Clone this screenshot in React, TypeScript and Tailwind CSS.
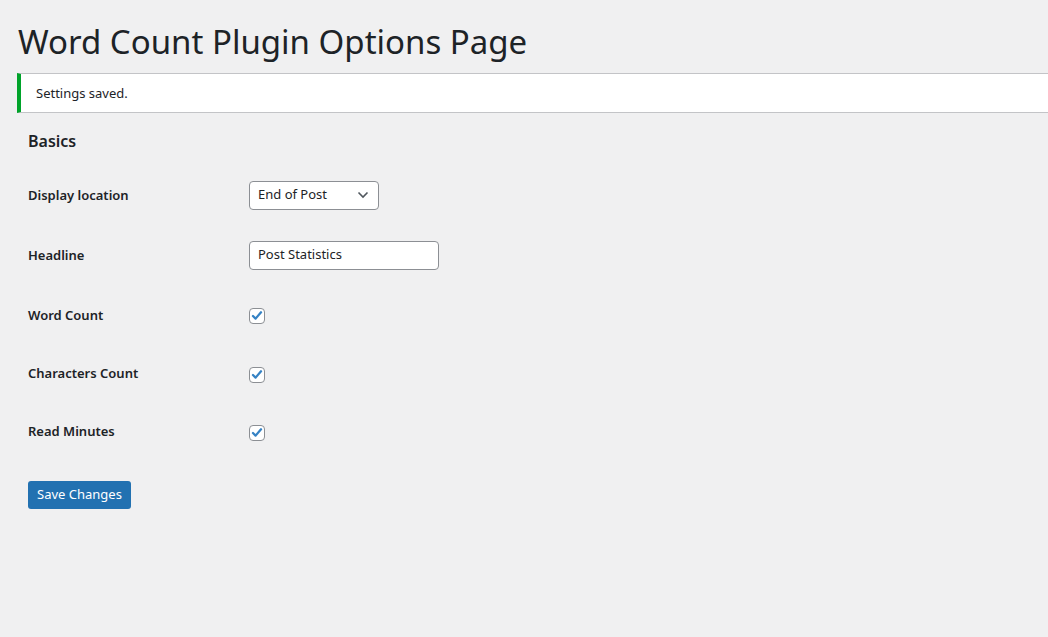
const font = { fontFamily: '"Noto Sans", "Open Sans", sans-serif' };

const CheckBox: React.FC<{ low?: boolean }> = ({ low }) => (
  <span
    className={`${low ? "mt-[4px]" : "mt-[2px]"} flex h-4 w-4 items-center justify-center rounded-[4px] border border-[#8c8f94] bg-white`}
  >
    <svg viewBox="0 0 16 16" className="h-[14px] w-[14px]">
      <path d="M3.4 8 L6.4 11 L12.6 3.8" fill="none" stroke="#3582c4" strokeWidth="2.6" strokeLinecap="round" strokeLinejoin="round" />
    </svg>
  </span>
);

const Row: React.FC<{ label: string; h: string; children: React.ReactNode }> = ({ label, h, children }) => (
  <div className={`flex items-center ${h}`}>
    <div className="w-[221px] pt-[2px] text-[13px] font-semibold text-[#1d2327]">{label}</div>
    <div className="flex items-center">{children}</div>
  </div>
);

export default function App() {
  return (
    <div className="min-h-[637px] w-full overflow-hidden bg-[#f0f0f1] text-[#1d2327]" style={font}>
      <div className="pl-[17px]">
        <h1 className="pt-[19px] pl-[1px] text-[33px] leading-[46px] font-normal">Word Count Plugin Options Page</h1>
        <div className="-mr-[4px] mt-[8px] flex h-[40px] items-center border border-r-0 border-l-4 border-[#c3c4c7] border-l-[#00a32a] bg-white pt-[2px] pl-[15px] text-[13px]">
          Settings saved.
        </div>
        <div className="pl-[11px]">
          <h2 className="mt-[17px] text-[16px] leading-[22px] font-semibold">Basics</h2>
          <div className="mt-[13px]">
            <Row label="Display location" h="h-[60px]">
              <div className="flex h-[29px] w-[130px] items-center justify-between rounded-[4px] border border-[#8c8f94] bg-white pr-[9px] pl-[8px] text-[13px]">
                <span>End of Post</span>
                <svg viewBox="0 0 12 8" className="h-[8px] w-[12px]">
                  <path d="M1.5 1.5 L6 6 L10.5 1.5" fill="none" stroke="#50575e" strokeWidth="1.6" />
                </svg>
              </div>
            </Row>
            <Row label="Headline" h="h-[60px]">
              <div className="flex h-[29px] w-[190px] items-center rounded-[4px] border border-[#8c8f94] bg-white pl-[8px] text-[13px]">
                Post Statistics
              </div>
            </Row>
            <Row label="Word Count" h="mt-[1px] h-[58px]">
              <CheckBox />
            </Row>
            <Row label="Characters Count" h="h-[58px]">
              <CheckBox low />
            </Row>
            <Row label="Read Minutes" h="h-[58px]">
              <CheckBox low />
            </Row>
          </div>
          <button className="mt-[21px] h-[28px] rounded-[3px] bg-[#2271b1] px-[9px] text-[13px] text-white">
            Save Changes
          </button>
        </div>
      </div>
    </div>
  );
}
